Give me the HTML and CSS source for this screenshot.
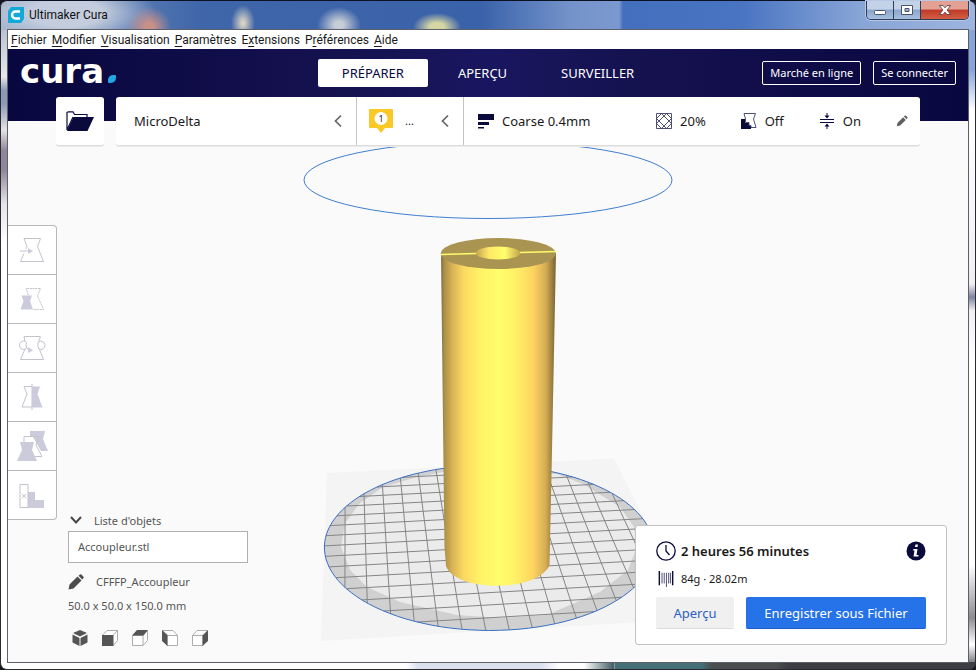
FILE: index.html
```html
<!DOCTYPE html>
<html lang="fr">
<head>
<meta charset="utf-8">
<title>Ultimaker Cura</title>
<link rel="stylesheet" href="styles.css">
</head>
<body>
<div class="window">
  <header class="titlebar">
    <svg class="app-icon" viewBox="0 0 16 16" aria-hidden="true"><path d="M3 0H16V12L13 16H0V4Z" fill="#12a9d8"/><path d="M12 4.500H7.500A3.500 3.500 0 0 0 7.500 11.500H12" fill="none" stroke="#fff" stroke-width="2.500"/></svg>
    <span class="app-title">Ultimaker Cura</span>
    <div class="window-controls">
      <button class="control" aria-label="Réduire"><svg viewBox="0 0 14 12"><rect x="1.500" y="6.500" width="11" height="4" rx="1" fill="#fff" stroke="#4a5568"/></svg></button>
      <button class="control" aria-label="Agrandir"><svg viewBox="0 0 14 12"><path d="M1.500 1.500H12.500V10.500H1.500ZM5 4.500V7.500H9V4.500Z" fill="#fff" fill-rule="evenodd" stroke="#4a5568"/></svg></button>
      <button class="control close" aria-label="Fermer"><svg viewBox="0 0 14 12"><path d="M1.500 1.500H5L7 3.800L9 1.500H12.500L9.200 6L12.500 10.500H9L7 8.200L5 10.500H1.500L4.800 6Z" fill="#fff" stroke="#5b3038" stroke-width=".8"/></svg></button>
    </div>
  </header>

  <div class="client">
    <nav class="menubar" aria-label="Menu">
      <button><u>F</u>ichier</button>
      <button><u>M</u>odifier</button>
      <button><u>V</u>isualisation</button>
      <button><u>P</u>aramètres</button>
      <button>E<u>x</u>tensions</button>
      <button>P<u>r</u>éférences</button>
      <button><u>A</u>ide</button>
    </nav>

    <div class="header">
      <div class="logo">cura<span class="logo-dot"></span></div>
      <nav class="stages" aria-label="Étapes">
        <button class="stage active">PRÉPARER</button>
        <button class="stage">APERÇU</button>
        <button class="stage">SURVEILLER</button>
      </nav>
      <div class="account">
        <button class="outline">Marché en ligne</button>
        <button class="outline">Se connecter</button>
      </div>
    </div>

    <div class="toolbar">
      <button class="open" aria-label="Ouvrir un fichier"><svg viewBox="0 0 28 20" width="28" height="20"><path d="M1 19V1.500L2.500 .8H7L8.500 3.500H21V6M1 19L7 6" fill="none" stroke="#0a0a3c" stroke-width="1.200"/><path d="M7.500 6H28L21.500 20H1Z" fill="#0a0a3c"/></svg></button>
      <div class="config">
        <button class="section printer"><span>MicroDelta</span><svg class="chevron" viewBox="0 0 8 14"><path d="M7 1.500L1.500 7L7 12.500" fill="none" stroke="#666" stroke-width="1.700"/></svg></button>
        <button class="section material">
          <svg viewBox="0 0 24 24" width="24" height="24"><path d="M1 0H23Q24 0 24 1V18Q24 19 23 19H16L12 24L8 19H1Q0 19 0 18V1Q0 0 1 0Z" fill="#fac927"/><circle cx="12" cy="9.500" r="6.500" fill="#fff"/><text x="12" y="13" class="extruder-number">1</text></svg>
          <span class="material-name">...</span>
          <svg class="chevron" viewBox="0 0 8 14"><path d="M7 1.500L1.500 7L7 12.500" fill="none" stroke="#666" stroke-width="1.700"/></svg>
        </button>
        <button class="section settings">
          <span class="item profile"><svg viewBox="0 0 16 16"><path d="M0 1H16V7H0ZM0 9H11V12H0ZM0 14H6V15.500H0Z" fill="#0a0a3c"/></svg>Coarse 0.4mm</span>
          <span class="item"><svg viewBox="0 0 16 16"><path d="M.5 .5H15.500V15.500H.5ZM.5 5.500L5.500 .5M.5 10.500L10.500 .5M5.500 15.500L15.500 5.500M10.500 15.500L15.500 10.500M.5 10.500L5.500 15.500M.5 5.500L10.500 15.500M5.500 .5L15.500 10.500M10.500 .5L15.500 5.500" fill="none" stroke="#3c3c66" stroke-width=".9"/></svg>20%</span>
          <span class="item"><svg viewBox="0 0 16 16"><path d="M0 6H4V10H8V13H10V16H0Z" fill="#0a0a3c"/><path d="M3 .5H14.500L12.500 6L15 14.500H10V12.500H8V9.500H4.500V6Z" fill="#fff" stroke="#3c3c66" stroke-width=".9"/></svg>Off</span>
          <span class="item"><svg viewBox="0 0 16 16"><path d="M1 6.500H15M1 9.500H15M8 0V3M8 13V16" stroke="#0a0a3c" fill="none"/><path d="M5.500 2.500H10.500L8 5.500ZM5.500 13.500H10.500L8 10.500Z" fill="#0a0a3c"/></svg>On</span>
          <svg class="edit" viewBox="0 0 16 16"><path d="M1 15L2 10.500L9.500 3L13 6.500L5.500 14ZM10.500 2L12 .7Q12.500 .3 13 .7L15.300 3Q15.700 3.500 15.300 4L14 5.500Z" fill="#606060"/></svg>
        </button>
      </div>
    </div>

    <main class="main">
      <svg class="scene" viewBox="8 146 960 516" preserveAspectRatio="xMidYMid slice" role="img" aria-label="Plateau et modèle">
        <defs>
          <linearGradient id="side">
            <stop offset="0" stop-color="#81703a"/><stop offset=".03" stop-color="#ab9049"/><stop offset=".1" stop-color="#d9b354"/><stop offset=".2" stop-color="#fdd961"/><stop offset=".34" stop-color="#fff267"/><stop offset=".5" stop-color="#fffd6b"/><stop offset=".64" stop-color="#fff267"/><stop offset=".8" stop-color="#fdd460"/><stop offset=".91" stop-color="#d6ad53"/><stop offset=".97" stop-color="#967c40"/><stop offset="1" stop-color="#75652f"/>
          </linearGradient>
          <linearGradient id="hole"><stop offset="0" stop-color="#c4a14e"/><stop offset=".3" stop-color="#ffe867"/><stop offset=".65" stop-color="#ffff6c"/><stop offset="1" stop-color="#c4a14e"/></linearGradient>
        </defs>
        <ellipse cx="488" cy="180" rx="184" ry="38.500" fill="none" stroke="#3f7fd0"/>
        <path d="M327 473L614 458.500L694 619L321 641Z" fill="#f4f4f4"/>
        <path id="bed" fill="#d0d0d0"/>
        <path d="M341 547L345 523L360 503L383 487L417 477L443 472L557 474L583 484L620 507L634 527L637 547L628 570L600 592L547 615L500 618L457 615L400 602L367 587L350 570Z" fill="#ebebeb"/>
        <path id="grid" fill="none" stroke="#858585"/>
        <path id="rim" fill="none" stroke="#3b6fc4"/>
        <path d="M441 254L444.500 547L446 566C455 592 538 593 549.500 565L552 450L556 253Z" fill="url(#side)"/>
        <ellipse cx="498.300" cy="253.500" rx="57.500" ry="15.500" fill="#aa9452"/>
        <ellipse cx="498" cy="253" rx="22.500" ry="6.500" fill="url(#hole)"/>
        <path d="M441 254.500L476 253.500M520 252.500L556 251.500" stroke="#fffc6a" stroke-width="1.300"/>
      </svg>

      <div class="tools" role="toolbar" aria-label="Outils">
        <button aria-label="Déplacer"><svg viewBox="0 0 28 28"><path d="M8 13L9 10.500L6 2.500H22.500L19.500 10.500L25.500 25.500H2.500L6 17.500" class="line"/><path d="M2 15H11" class="line"/><path d="M10 12L15 15L10 18Z" class="solid"/></svg></button>
        <button aria-label="Mettre à l'échelle"><svg viewBox="0 0 28 28"><path d="M10.500 10L8 3.500H22.500L19.500 11L25.500 24.500H15" class="line" stroke-dasharray="2 .7"/><path d="M3.500 10.500H14L12 16L15 24.500H2.500L5.500 16Z" class="solid"/></svg></button>
        <button aria-label="Tourner"><svg viewBox="0 0 28 28"><path d="M7 7L6 2.500H22.500L20.500 7.500M7 15L2.500 25.500H25.500L21.500 15.500" class="line"/><path d="M8.500 14A4 4.200 0 1 1 8.500 8.500Q7.500 11 8.500 14ZM20 8.500A4 4.200 0 1 1 21 15Q19 12 20 8.500Z" class="line"/><path d="M8.500 14L12 16" class="line"/><path d="M10.500 13L15 16.500L10 19Z" class="solid"/></svg></button>
        <button aria-label="Miroir"><svg viewBox="0 0 28 28"><path d="M14 3.500H6L9 11L4 24H14M14 1V27" class="line"/><path d="M14 3.500H22L19.500 11L24.500 24.500H14Z" class="solid"/></svg></button>
        <button aria-label="Paramètres par modèle"><svg class="large" viewBox="0 0 32 32"><path d="M14 1H29L27 9L32 21H25L17 7H14Z" class="solid"/><path d="M8 12V6.500H23L20 15L26 26.500H19" class="line"/><path d="M4 12H18L16 20L21 31H1L6 20Z" class="solid"/></svg></button>
        <button aria-label="Bloqueur de support"><svg viewBox="0 0 28 28"><path d="M10 11H17V19H26V27H10Z" class="solid"/><path d="M2 3.500H10V26.500H2ZM4 13L8 17M8 13L4 17" class="line"/></svg></button>
      </div>

      <section class="objects">
        <button class="objects-title"><svg viewBox="0 0 12 12"><path d="M1 2L6 7.500L11 2" fill="none" stroke="#484848" stroke-width="2"/></svg>Liste d'objets</button>
        <div class="object-file">Accoupleur.stl</div>
        <button class="job-name"><svg viewBox="0 0 16 16"><path d="M.5 15.500L1.500 10.500L9.500 2.500L13.500 6.500L5.500 14.500ZM10.500 1.700L12 .5Q12.600 0 13.300 .5L15.500 2.700Q16 3.400 15.500 4L14.200 5.400Z" fill="#4d4d4d"/></svg>CFFFP_Accoupleur</button>
        <div class="dimensions">50.0 x 50.0 x 150.0 mm</div>
        <div class="views">
          <button aria-label="Vue 3D"><svg viewBox="0 0 16 16"><path d="M8 0L15 3L8 6.500L1 3ZM.5 4.500L7.500 8V16L.5 12.500ZM15.500 4.500L8.500 8V16L15.500 12.500Z" class="face"/></svg></button>
          <button aria-label="Vue de face"><svg viewBox="0 0 16 16"><path d="M.5 5.500L5 .5H15.500V10.500L11 15.500M11 5.500L15.500 .5" class="edge"/><path d="M0 5H11.500V16H0Z" class="face"/></svg></button>
          <button aria-label="Vue du dessus"><svg viewBox="0 0 16 16"><path d="M.5 5.500H11V15.500H.5ZM15.500 .5V10.500L11 15.500" class="edge"/><path d="M0 5.500L5 0H16L11.500 5.500Z" class="face"/></svg></button>
          <button aria-label="Vue gauche"><svg viewBox="0 0 16 16"><path d="M5 5.500H15.500V15.500H5ZM.5 .5H11L15.500 5.500" class="edge"/><path d="M0 0L5.500 5V16L0 11Z" class="face"/></svg></button>
          <button aria-label="Vue droite"><svg viewBox="0 0 16 16"><path d="M.5 5.500H11V15.500H.5ZM.5 5.500L5 .5H15.500" class="edge"/><path d="M10.500 5.500L16 0V11L10.500 16Z" class="face"/></svg></button>
        </div>
      </section>

      <section class="panel">
        <div class="time">
          <svg viewBox="0 0 20 20"><circle cx="10" cy="10" r="9.200" fill="none" stroke="#0a0a3c" stroke-width="1.300"/><path d="M10 4V10L13.500 14" fill="none" stroke="#0a0a3c" stroke-width="1.300"/></svg>
          <strong>2 heures 56 minutes</strong>
          <button class="info" aria-label="Informations"><svg viewBox="0 0 20 20"><circle cx="10" cy="10" r="9.500" fill="#0a0a3c"/><path d="M9.500 3.500H12L11.500 6H9ZM7.500 8H11.500L10.500 14H12.500V15.500H7.500L8.500 9.500H7Z" fill="#fff"/></svg></button>
        </div>
        <div class="usage">
          <svg viewBox="0 0 20 18"><path d="M2.500 0V16M17.500 0V16" stroke="#0a0a3c" stroke-width="1.600"/><path d="M5.500 2V14M8 2V14M13 2V14M15 2V14M10.500 2V18" stroke="#3c3c66"/></svg>
          <span>84g · 28.02m</span>
        </div>
        <div class="actions">
          <button class="secondary">Aperçu</button>
          <button class="primary">Enregistrer sous Fichier</button>
        </div>
      </section>
    </main>
  </div>
</div>
<script src="scene.js"></script>
</body>
</html>
```
FILE: styles.css
```css
* { box-sizing: border-box; }

body {
  margin: 0;
  background: #15171c;
  color: #191919;
  font: 13px/16px "Noto Sans", "Open Sans", sans-serif;
}

button {
  margin: 0;
  padding: 0;
  border: 0;
  background: none;
  color: inherit;
  font: inherit;
  text-align: left;
  white-space: nowrap;
}

svg { display: block; flex: none; }

/* Window frame */
.window {
  display: flex;
  flex-direction: column;
  min-height: 100vh;
  padding: 0 6px 6px;
  border: 1px solid #292b30;
  border-top-color: #0b1224;
  border-radius: 7px;
  background:
    radial-gradient(ellipse 22px 20px at 148px 26px, #c99088 20%, transparent),
    radial-gradient(ellipse 12px 18px at 242px 22px, #d9d2c4 10%, transparent),
    radial-gradient(ellipse 22px 18px at 338px 24px, #c7cdd6 20%, transparent),
    radial-gradient(ellipse 24px 14px at 436px 26px, #d6d6a4 30%, transparent),
    radial-gradient(ellipse 90px 34px at 65px 12px, #c3cddd 40%, transparent) no-repeat 0 0 / 100% 29px,
    linear-gradient(90deg, #9fafc8, #5e7fb5 110px, #3f66a9 200px, #3a62aa 480px, #7493ca 570px, #7b99cf 618px, #446fbe 622px, #4974c2 740px, #88a5d6 860px, #9db5de) no-repeat 0 0 / 100% 29px,
    linear-gradient(90deg, #fff 66%, #dde0ef 68%, #dde0ef 88%, #fff 91%, #fff 95%, #3f5a60) no-repeat 0 100% / 63% 7px,
    linear-gradient(90deg, #467077 24%, #4a4e4e 27%, #4a4e4e 45%, #3c3e42 48%) no-repeat 100% 100% / 37% 7px,
    linear-gradient(#b9c2d4, #e8e8ec 7%, #8c9ab8 9%, #8c9ab8 11%, #e6e3e4 15%, #8f879a 18%, #8f879a 21%, #e6e3ea 26%, #fff 32%) no-repeat 0 29px / 7px 100%,
    linear-gradient(#86a6db 6%, #fff 12%, #f1eff2 38%, #7d83a0 40%, #f1eff2 42%, #fff 50%, #fff 80%, #8d8d91 88%, #fff 92%, #3c3e42 96%) no-repeat 100% 29px / 7px 100%,
    #fff;
}

.titlebar {
  display: flex;
  align-items: center;
  gap: 5px;
  height: 28px;
  font: 12px/16px Roboto, sans-serif;
}

.app-icon { width: 16px; height: 16px; margin-left: 1px; }
.app-title { color: #111; }

.window-controls {
  display: flex;
  align-self: flex-start;
  height: 19px;
  margin-left: auto;
  border: 1px solid #2d3c58;
  border-top: 0;
  border-radius: 0 0 5px 5px;
  box-shadow: 0 0 0 1px #b7c8e6;
  overflow: hidden;
}

.control {
  display: grid;
  place-items: center;
  width: 27px;
  border-right: 1px solid #2d3c58;
  background: linear-gradient(#c4d2e8 45%, #8ba5cc 50%, #a8bfdf);
}
.control svg { width: 14px; height: 12px; }
.control.close {
  width: 47px;
  border-right: 0;
  background: linear-gradient(#e3a193 45%, #c03a28 50%, #d25f42);
}

.client {
  display: flex;
  flex: 1;
  flex-direction: column;
  border: 1px solid #5d6068;
  background: #fafafa;
}

.menubar {
  display: flex;
  align-items: center;
  gap: 5px;
  height: 19px;
  padding: 0 3px;
  background: #fff;
  font: 12px/16px Roboto, sans-serif;
}
.menubar u { text-underline-offset: 2px; }

/* Header */
.header {
  display: grid;
  grid-template-columns: 1fr auto 1fr;
  align-items: start;
  height: 72px;
  padding: 10px 12px 0;
  background: linear-gradient(90deg, #08073f, #151250 35%, #191660 50%, #151250 65%, #08073f);
  color: #fff;
}

.logo {
  display: flex;
  align-items: baseline;
  gap: 4px;
  font: bold 34px/24px "DejaVu Sans", sans-serif;
}
.logo-dot {
  width: 8px;
  height: 8px;
  border-radius: 5px 1px 5px 1px;
  background: #22a7e0;
}

.stages { display: flex; gap: 6px; }
.stage {
  height: 28px;
  padding: 0 24px;
  border-radius: 2px;
}
.stage.active { background: #fff; color: #08073f; }

.account {
  display: flex;
  justify-content: flex-end;
  gap: 12px;
  padding-top: 2px;
}
.outline {
  height: 24px;
  padding: 0 7px;
  border: 1px solid #fff;
  border-radius: 2px;
  font-size: 11px;
}

/* Configuration bar */
.toolbar {
  position: relative;
  z-index: 1;
  display: flex;
  gap: 12px;
  height: 49px;
  margin: -24px 48px 0;
}
.open, .config {
  border-bottom: 1px solid #dcdcdc;
  border-radius: 3px;
  background: #fff;
  box-shadow: 0 1px 0 #ebebeb;
}
.open { display: grid; place-items: center; width: 48px; }
.config { display: flex; flex: 1; }
.section {
  display: flex;
  align-items: center;
  padding: 0 14px 0 18px;
  border-right: 1px solid #c4c4c8;
}
.printer { width: 241px; }
.material { width: 107px; padding-left: 12px; }
.settings { flex: 1; gap: 35px; padding: 0 12px 0 14px; border-right: 0; }
.chevron { width: 8px; height: 14px; margin-left: auto; }
.material-name { margin-left: 12px; font-size: 11px; }
.extruder-number { font-size: 9px; text-anchor: middle; fill: #191919; }
.item { display: flex; align-items: center; gap: 8px; }
.item svg { width: 16px; height: 16px; }
.profile { flex: 1; }
.edit { width: 12px; height: 12px; }

/* Workspace */
.main {
  position: relative;
  display: flex;
  flex: 1;
  align-items: flex-end;
}
.main > :not(.scene) { position: relative; }
.scene { position: absolute; inset: 0; width: 100%; height: 100%; }

.tools {
  display: flex;
  flex-direction: column;
  align-self: flex-start;
  width: 49px;
  margin-top: 79px;
  border: 1px solid #b8b8b8;
  border-left: 0;
  border-radius: 0 4px 4px 0;
  background: #fff;
}
.tools button {
  display: grid;
  place-items: center;
  height: 49px;
  border-bottom: 1px solid #b8b8b8;
}
.tools button:last-child { height: 48px; border-bottom: 0; }
.tools svg { width: 28px; height: 28px; }
.tools svg.large { width: 32px; height: 32px; }
.line { fill: none; stroke: #c3c3cc; }
.solid { fill: #cbcbdb; }

.objects {
  width: 180px;
  margin: 0 0 16px 11px;
  color: #555;
  font-size: 11px;
}
.objects-title, .job-name { display: flex; align-items: center; }
.objects-title { gap: 12px; padding-left: 2px; }
.objects-title svg { width: 12px; height: 12px; }
.object-file {
  height: 32px;
  margin: 2px 0 11px;
  padding: 0 9px;
  border: 1px solid #b0b0b0;
  background: #fff;
  line-height: 30px;
}
.job-name { gap: 12px; }
.job-name svg { width: 16px; height: 16px; }
.dimensions { margin-top: 8px; }
.views { display: flex; gap: 14px; margin: 16px 0 0 4px; }
.views svg { width: 16px; height: 16px; }
.face { fill: #555; }
.edge { fill: #fff; stroke: #999; stroke-width: .8; }

.panel {
  width: 312px;
  margin: 0 21px 17px auto;
  padding: 15px 20px 15px 20px;
  border: 1px solid #c2c2c2;
  border-radius: 3px;
  background: #fff;
}
.time, .usage { display: flex; align-items: center; gap: 5px; }
.time svg { width: 20px; height: 20px; }
.time strong { font-weight: 600; }
.info { margin-left: auto; }
.usage { margin: 10px 0; font-size: 11px; }
.usage svg { width: 20px; height: 16px; }
.actions { display: grid; grid-template-columns: 78px 1fr; gap: 12px; }
.actions button { height: 32px; border-radius: 2px; text-align: center; }
.secondary { border-bottom: 1px solid #dcdcdc; background: #f0f0f0; color: #2b62c0; }
.primary { border-bottom: 1px solid #1b5bc4; background: #2672e8; color: #fff; }
```
FILE: scene.js
```js
// Projects the round build plate and its 10 mm grid onto the tilted bed plane.
const [a, b, c, d] = [[327, 473], [614, 458.5], [694, 619], [321, 641]];

const dx1 = b[0] - c[0], dx2 = d[0] - c[0], sx = a[0] - b[0] + c[0] - d[0];
const dy1 = b[1] - c[1], dy2 = d[1] - c[1], sy = a[1] - b[1] + c[1] - d[1];
const det = dx1 * dy2 - dx2 * dy1;
const g = (sx * dy2 - dx2 * sy) / det;
const h = (dx1 * sy - sx * dy1) / det;

// x and y run from -1 to 1 across the bed.
function project(x, y) {
  const u = (x + 1) / 2, v = (y + 1) / 2, w = g * u + h * v + 1;
  return [
    ((b[0] - a[0] + g * b[0]) * u + (d[0] - a[0] + h * d[0]) * v + a[0]) / w,
    ((b[1] - a[1] + g * b[1]) * u + (d[1] - a[1] + h * d[1]) * v + a[1]) / w
  ].map(n => n.toFixed(1)).join(" ");
}

const circle = [];
for (let i = 0; i < 120; i++) {
  const t = i * Math.PI / 60;
  circle.push(project(Math.cos(t), Math.sin(t)));
}
const outline = "M" + circle.join("L") + "Z";
document.getElementById("bed").setAttribute("d", outline);
document.getElementById("rim").setAttribute("d", outline);

let lines = "";
for (let i = -7; i <= 7; i++) {
  const p = i / 8, r = Math.sqrt(1 - p * p);
  lines += "M" + project(p, -r) + "L" + project(p, r);
  lines += "M" + project(-r, p) + "L" + project(r, p);
}
document.getElementById("grid").setAttribute("d", lines);
```
